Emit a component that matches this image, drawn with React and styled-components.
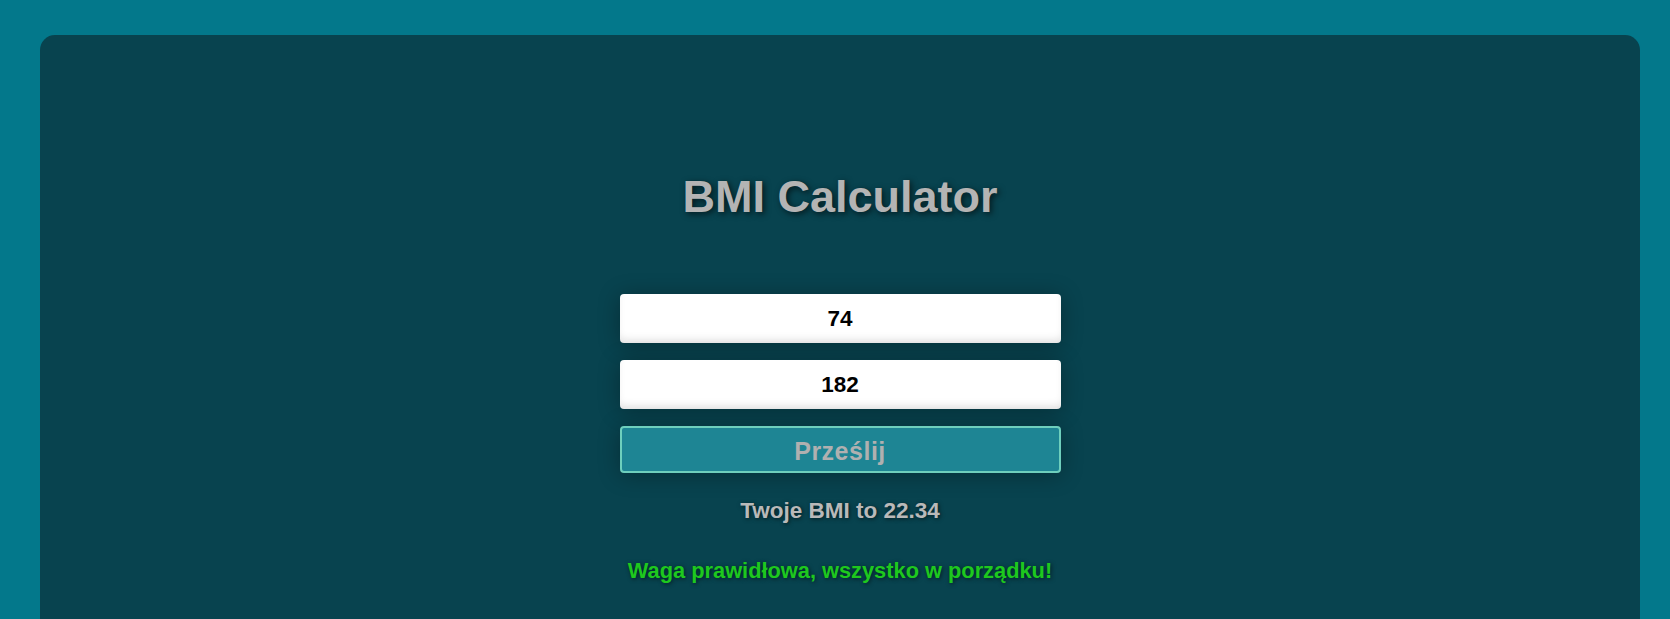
import React from "react";
import { useState } from "react";
import styled, { createGlobalStyle } from "styled-components";

const GlobalStyle = createGlobalStyle`
    html,
    body {
        margin: 0;
        padding: 0;
        background: #03788b;
        font-family: "Liberation Sans", Arial, sans-serif;
    }
`;

const Page = styled.div`
    min-height: 100vh;
    padding: 35px 30px 0 40px;
    box-sizing: border-box;
`;

const Panel = styled.main`
    background: #08434f;
    border-radius: 15px;
    min-height: 700px;
    padding-top: 136px;
    display: flex;
    flex-direction: column;
    align-items: center;
`;

const Title = styled.h1`
    margin: 0 0 71px;
    font-size: 45px;
    font-weight: 700;
    line-height: normal;
    color: #b4b4b4;
    text-shadow: 2px 2px 6px rgba(0, 0, 0, 0.65);
`;

const Form = styled.form`
    width: 441px;
    display: flex;
    flex-direction: column;
    gap: 17px;
`;

const Field = styled.input`
    height: 49px;
    box-sizing: border-box;
    border: none;
    border-radius: 4px;
    background: #fff;
    text-align: center;
    font-family: "Liberation Sans", Arial, sans-serif;
    font-size: 22.5px;
    font-weight: 700;
    color: #000;
    outline: none;
    box-shadow: inset 0 -6px 8px -3px rgba(0, 0, 0, 0.12), 0 2px 22px rgba(0, 0, 0, 0.3);
`;

const Submit = styled.button`
    height: 47px;
    box-sizing: border-box;
    padding-top: 4px;
    border: 2px solid #6ecfbd;
    border-radius: 4px;
    background: #1e8594;
    color: #b0b0b0;
    font-family: "Liberation Sans", Arial, sans-serif;
    font-size: 25px;
    font-weight: 700;
    letter-spacing: 0.5px;
    cursor: pointer;
    box-shadow: 0 2px 22px rgba(0, 0, 0, 0.3);
`;

const Result = styled.p`
    margin: 25px 0 0;
    font-size: ${(p) => p.size || 22.5}px;
    font-weight: 700;
    line-height: normal;
    color: ${(p) => p.color};
    text-shadow: 1px 1px 4px rgba(0, 0, 0, 0.6);

    & + & {
        margin-top: 34px;
    }
`;

function App() {
    const [weight, setWeight] = useState("74"); //waga
    const [height, setHeight] = useState("182"); //wzrost

    const bmi = (Number(weight) / Math.pow(Number(height) / 100, 2)).toFixed(2);

    return (
        <>
            <GlobalStyle />
            <Page>
                <Panel>
                    <Title>BMI Calculator</Title>
                    <Form onSubmit={(e) => e.preventDefault()}>
                        <Field value={weight} onChange={(e) => setWeight(e.target.value)} />
                        <Field value={height} onChange={(e) => setHeight(e.target.value)} />
                        <Submit type="submit">Prześlij</Submit>
                    </Form>
                    <Result color="#b9b9b9">Twoje BMI to {bmi}</Result>
                    <Result color="#1ec81e" size={21.8}>
                        Waga prawidłowa, wszystko w porządku!
                    </Result>
                </Panel>
            </Page>
        </>
    );
}

export default App;
